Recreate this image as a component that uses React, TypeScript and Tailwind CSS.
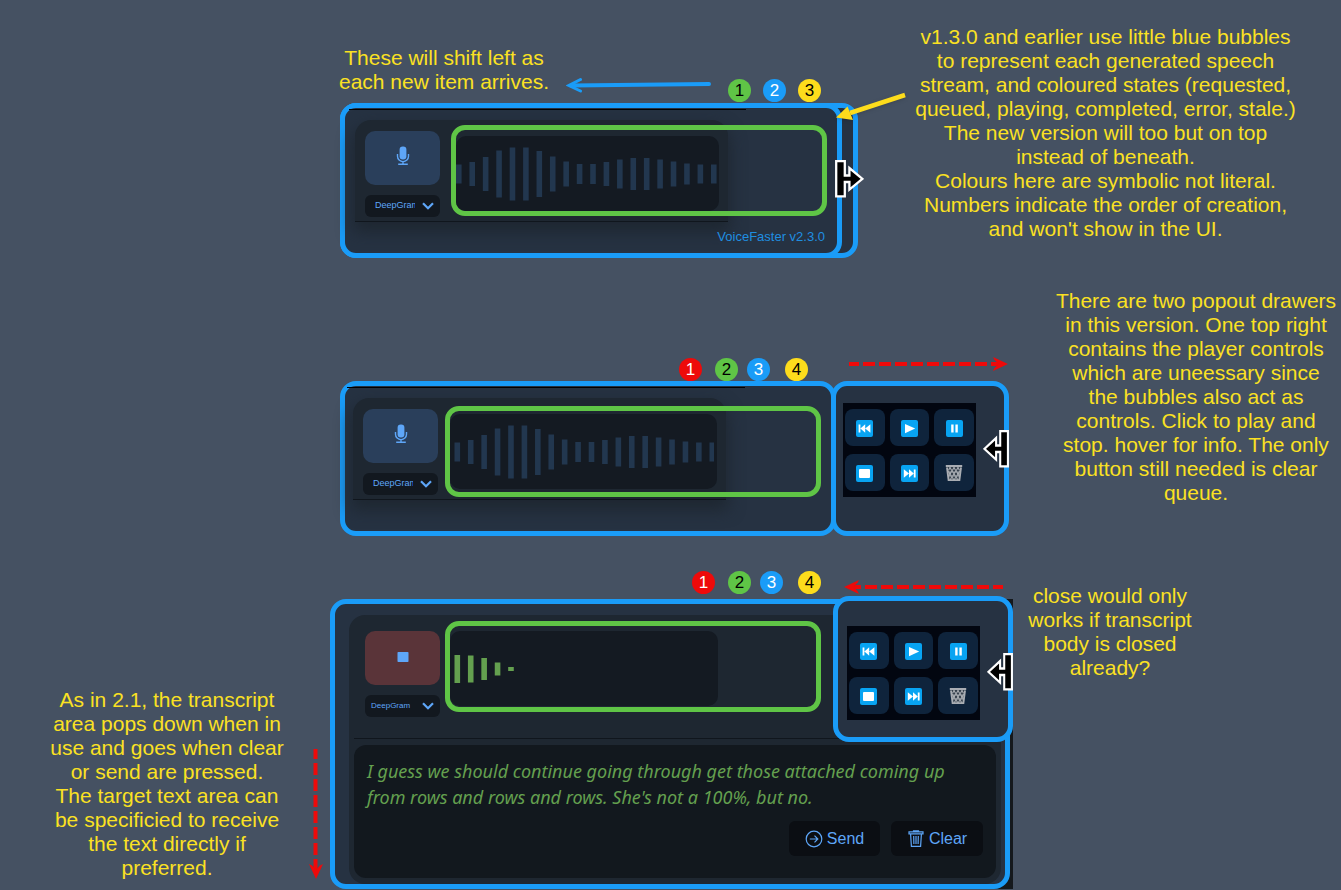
import React from "react";

type Tone = "red" | "green" | "blue" | "yellow";

const toneClass: Record<Tone, string> = {
  red: "bg-[#ee0a0a] text-white",
  green: "bg-[#5fc546] text-black",
  blue: "bg-[#1a9cf8] text-white",
  yellow: "bg-[#fddc1c] text-black",
};

function Bubble({ n, tone, className = "" }: { n: number; tone: Tone; className?: string }) {
  return (
    <span
      className={`flex size-[23px] shrink-0 items-center justify-center rounded-full text-[17px] leading-6 ${toneClass[tone]} ${className}`}
    >
      {n}
    </span>
  );
}

function Note({ lines, className = "" }: { lines: string[]; className?: string }) {
  return (
    <p className={`text-center text-[21px] leading-6 whitespace-nowrap text-[#fbe122] ${className}`}>
      {lines.map((line) => (
        <span key={line} className="block">
          {line}
        </span>
      ))}
    </p>
  );
}

function MicIcon() {
  return (
    <svg className="-mt-1" width="14" height="20" viewBox="0 0 14 20" fill="none" aria-hidden="true">
      <rect x="3.6" y="0.6" width="6.8" height="12.8" rx="3.2" fill="#5ea6f8" />
      <path d="M1.5 8v2.2a5.500 5.500 0 0 0 11 0V8M7 15.700V18M2.200 18.300h9.600" stroke="#5ea6f8" strokeWidth="1.400" />
    </svg>
  );
}

function StopIcon() {
  return (
    <svg className="-mt-0.5" width="12" height="12" viewBox="0 0 12 12" aria-hidden="true">
      <rect x="0.5" y="1" width="11" height="10" rx="0.8" fill="#5ea6f8" />
    </svg>
  );
}

function Provider({ narrow = false }: { narrow?: boolean }) {
  return (
    <div
      className={`mt-[10px] flex h-[22px] w-[75px] items-center rounded-md bg-[#12181f] ${
        narrow ? "pl-[6px]" : "pl-[10px]"
      }`}
    >
      <select
        aria-label="Speech provider"
        className={`h-full shrink-0 appearance-none bg-transparent p-0 text-[#5ea6f8] outline-none ${
          narrow ? "w-[42px] text-[8px]" : "w-10 text-[9px]"
        }`}
      >
        <option>DeepGram</option>
      </select>
      <svg
        className={`pointer-events-none ${narrow ? "ml-[9px]" : "ml-[7px]"}`}
        width="12"
        height="8"
        viewBox="0 0 12 8"
        fill="none"
        aria-hidden="true"
      >
        <path d="M1 1.2l5 5 5-5" stroke="#5ea6f8" strokeWidth="2.2" />
      </svg>
    </div>
  );
}

const idleBars = [19, 24, 34, 47, 53, 53, 46, 35, 25, 20, 20, 24, 29, 32, 32, 29, 25, 21, 19, 19];
const liveBars = [28, 27, 22, 13, 4];

function Waveform({ bars, color, start }: { bars: number[]; color: string; start: number }) {
  return (
    <svg width="264" height="75" viewBox="0 0 264 75" aria-hidden="true">
      {bars.map((h, i) => (
        <rect key={i} x={start + i * 13.42} y={38 - h / 2} width="5.6" height={h} fill={color} />
      ))}
    </svg>
  );
}

function Recorder({
  recording = false,
  start,
  stageClass,
  waveClass,
}: {
  recording?: boolean;
  start: number;
  stageClass: string;
  waveClass: string;
}) {
  return (
    <div className="flex items-start">
      <div className="shrink-0">
        <button
          type="button"
          aria-label={recording ? "Stop recording" : "Start recording"}
          className={`flex h-[54px] w-[75px] items-center justify-center rounded-[10px] ${
            recording ? "bg-[#5a3439]" : "bg-[#2a3f5b]"
          }`}
        >
          {recording ? <StopIcon /> : <MicIcon />}
        </button>
        <Provider narrow={recording} />
      </div>
      <div className={`h-[91px] w-[376px] shrink-0 rounded-[14px] border-5 border-[#5fc546] ${stageClass}`}>
        <div className={`overflow-hidden rounded-[10px] bg-[#141a22] ${waveClass}`}>
          <Waveform bars={recording ? liveBars : idleBars} color={recording ? "#64a04f" : "#22374f"} start={start} />
        </div>
      </div>
    </div>
  );
}

function ResizeHandle({ flip = false, className = "" }: { flip?: boolean; className?: string }) {
  return (
    <svg
      className={`absolute ${flip ? "-scale-x-100" : ""} ${className}`}
      width={flip ? 26 : 29}
      height="38"
      viewBox="0 0 29 38"
      preserveAspectRatio="none"
      aria-hidden="true"
    >
      <path
        d="M1.2 1.2H9.8V15.500H14.400V8L27.400 18.800L14.400 29.600V22H9.800V36.400H1.200Z"
        fill="#000"
        stroke="#fff"
        strokeWidth="2.300"
      />
    </svg>
  );
}

const glyphs: { name: string; node: React.ReactNode }[] = [
  { name: "Previous", node: <path d="M2.600 4.500h1.800v8H2.600zM9.200 4.300v8.400L4.400 8.500zM14.400 4.300v8.400L9.200 8.500z" fill="#fff" /> },
  { name: "Play", node: <path d="M4 4v9.200l10.200-4.600z" fill="#fff" /> },
  { name: "Pause", node: <path d="M5.200 4.500h2.400v8H5.200zM9.400 4.500h2.400v8H9.400z" fill="#fff" /> },
  { name: "Stop", node: <rect x="3" y="4" width="11" height="9" rx="1" fill="#fff" /> },
  { name: "Next", node: <path d="M12.800 4.500h1.800v8h-1.800zM8 4.300v8.400l4.800-4.200zM2.800 4.300v8.400l5.200-4.200z" fill="#fff" /> },
];

function BinIcon() {
  return (
    <svg width="18" height="18" viewBox="0 0 18 18" fill="none" aria-hidden="true">
      <path d="M1.500 2.600h15l-1.800 13.600H3.300z" fill="#35404c" />
      <path d="M.8 2h16.400M2 3.500l1.600 12.600h10.800L16 3.500" stroke="#a9adb3" strokeWidth="1.900" />
      <path
        d="M4.500 3l8.500 13M8.500 3l5.500 8.500M12.500 3l2 3.200M3 7l6 9M13.500 3L5 16M9.500 3L4 11.500M5.500 3l-2 3.200M15 7l-6 9M2.400 8h13.200M3 12h12"
        stroke="#a9adb3"
        strokeWidth="1.100"
      />
    </svg>
  );
}

function PlayerControls() {
  return (
    <div className="grid h-[94px] w-[133px] grid-cols-3 gap-x-[5px] gap-y-2 bg-[#020610] px-[2px] py-[6px]">
      {glyphs.map((g) => (
        <button
          key={g.name}
          type="button"
          aria-label={g.name}
          className="flex items-center justify-center rounded-lg bg-[#0f243c] pt-0.5"
        >
          <svg width="17" height="17" viewBox="0 0 17 17" aria-hidden="true">
            <rect width="17" height="17" rx="2" fill="#08a4f2" />
            {g.node}
          </svg>
        </button>
      ))}
      <button
        type="button"
        aria-label="Clear queue"
        className="flex items-center justify-center rounded-lg bg-[#0f243c] pt-0.5"
      >
        <BinIcon />
      </button>
    </div>
  );
}

function DashedArrow({ left = false, className = "" }: { left?: boolean; className?: string }) {
  return (
    <svg
      className={`${left ? "-scale-x-100" : ""} ${className}`}
      width="160"
      height="16"
      viewBox="0 0 160 16"
      fill="none"
      aria-hidden="true"
    >
      <path d="M0 8h152" stroke="#ee0a0a" strokeWidth="4" strokeDasharray="12 4" strokeDashoffset="2" />
      <path d="M144 1l15 7-15 7 1.500-3 4.500-4-4.500-4z" fill="#ee0a0a" />
    </svg>
  );
}

const cardClass =
  "h-[102px] w-[373px] rounded-t-2xl border-b border-[#10161d] bg-[#1e2731] shadow-[0_8px_16px_2px_#1e2731]";

export default function App() {
  return (
    <main
      className="min-h-screen overflow-hidden bg-[#455162]"
      style={{ fontFamily: '"Liberation Sans", Arial, sans-serif' }}
    >
      <section className="flex min-h-[289px] items-start pl-[338px]">
        <div className="relative w-[520px] shrink-0">
          <div className="flex h-[103px] items-end pb-px">
            <Note className="mb-2 w-[212px]" lines={["These will shift left as", "each new item arrives."]} />
            <svg className="mb-[9px] ml-4 shrink-0" width="146" height="16" viewBox="0 0 146 16" fill="none" aria-hidden="true">
              <path d="M5 8.500L143 7" stroke="#1a9cf8" strokeWidth="4" strokeLinecap="round" />
              <path d="M14.500 2.500L3 8.500l11.500 5.500" stroke="#1a9cf8" strokeWidth="3" strokeLinecap="round" />
            </svg>
            <div className="ml-4 flex gap-3">
              <Bubble n={1} tone="green" />
              <Bubble n={2} tone="blue" />
              <Bubble n={3} tone="yellow" />
            </div>
          </div>
          <div className="ml-0.5 h-[155px] rounded-2xl border-5 border-[#1a9cf8] bg-[#263242]">
            <div className="-m-[5px] flex h-[155px] w-[502px] flex-col rounded-2xl border-5 border-[#1a9cf8] bg-[#263242]">
              <div className="mt-px ml-1 h-px w-[397px] bg-black" />
              <div className={`mt-[10px] ml-[10px] pt-[11px] pl-[10px] ${cardClass}`}>
                <Recorder start={0} stageClass="ml-[11px] -mt-[6px]" waveClass="mt-[6px] h-[75px] w-[263px]" />
              </div>
              <p className="relative mt-[7px] mr-3 text-right text-[13px] leading-4 text-[#1f8ee0]">VoiceFaster v2.3.0</p>
            </div>
          </div>
          <ResizeHandle className="top-[160px] left-[497px]" />
          <svg className="absolute top-[88px] left-[496px] drop-shadow" width="76" height="36" viewBox="0 0 76 36" aria-hidden="true">
            <path d="M71 7L16 25" stroke="#fddc1c" strokeWidth="4.500" />
            <path d="M2 29.500L13.500 18.500 19 32z" fill="#fddc1c" />
          </svg>
        </div>
        <Note
          className="flex-1 pt-[25px] pl-3"
          lines={[
            "v1.3.0 and earlier use little blue bubbles",
            "to represent each generated speech",
            "stream, and coloured states (requested,",
            "queued, playing, completed, error, stale.)",
            "The new version will too but on top",
            "instead of beneath.",
            "Colours here are symbolic not literal.",
            "Numbers indicate the order of creation,",
            "and won't show in the UI.",
          ]}
        />
      </section>

      <section className="flex min-h-[282px] items-start pl-[340px]">
        <div className="w-[669px] shrink-0">
          <div className="flex h-[92px] items-end pl-[339px]">
            <Bubble n={1} tone="red" />
            <Bubble n={2} tone="green" className="ml-[13px]" />
            <Bubble n={3} tone="blue" className="ml-[9px]" />
            <Bubble n={4} tone="yellow" className="ml-[15px]" />
            <DashedArrow className="mb-[9px] ml-[41px] shrink-0" />
          </div>
          <div className="flex">
            <div className="h-[155px] w-[496px] shrink-0 rounded-2xl border-5 border-[#1a9cf8] bg-[#263242]">
              <div className="mt-px ml-0.5 h-px w-[398px] bg-black" />
              <div className={`mt-[10px] ml-2 pt-[11px] pl-[10px] ${cardClass}`}>
                <Recorder start={4.5} stageClass="ml-[7px] -mt-[3px]" waveClass="mt-[3px] h-[75px] w-[267px]" />
              </div>
            </div>
            <div className="relative -ml-[5px] h-[155px] flex-1 rounded-2xl border-5 border-[#1a9cf8] bg-[#263242] pt-[17px] pl-[7px]">
              <PlayerControls />
              <ResizeHandle flip className="top-[44px] -right-[5px]" />
            </div>
          </div>
        </div>
        <Note
          className="flex-1 pl-[42px]"
          lines={[
            "There are two popout drawers",
            "in this version. One top right",
            "contains the player controls",
            "which are uneessary since",
            "the bubbles also act as",
            "controls. Click to play and",
            "stop. hover for info. The only",
            "button still needed is clear",
            "queue.",
          ]}
        />
      </section>

      <section className="flex items-start">
        <Note
          className="w-[300px] shrink-0 pt-[117px] pl-[34px]"
          lines={[
            "As in 2.1, the transcript",
            "area pops down when in",
            "use and goes when clear",
            "or send are pressed.",
            "The target text area can",
            "be specificied to receive",
            "the text directly if",
            "preferred.",
          ]}
        />
        <svg className="mt-[178px] shrink-0" width="30" height="132" viewBox="0 0 30 132" fill="none" aria-hidden="true">
          <path d="M15.500 0V124" stroke="#ee0a0a" strokeWidth="4" strokeDasharray="12 4" strokeDashoffset="2" />
          <path d="M9 115l7 15 7-15-3 1.500-4 4.500-4-4.500z" fill="#ee0a0a" />
        </svg>
        <div className="relative w-[683px] shrink-0">
          <div className="flex h-7 items-start pl-[362px]">
            <Bubble n={1} tone="red" />
            <Bubble n={2} tone="green" className="ml-[13px]" />
            <Bubble n={3} tone="blue" className="ml-[9px]" />
            <Bubble n={4} tone="yellow" className="ml-[15px]" />
            <DashedArrow left className="mt-2 ml-[22px] shrink-0" />
          </div>
          <div className="bg-[linear-gradient(to_right,transparent_50%,#15191d_50%)] pr-[3px]">
            <div className="h-[290px] rounded-2xl border-5 border-[#1a9cf8] bg-[#263242] pt-[11px] pr-1 pl-[14px]">
              <div className="h-[269px] rounded-2xl bg-[#1e2731] pr-[5px] pl-[5px]">
                <div className="h-[124px] border-b border-[#10161d] pt-4 pl-[11px]">
                  <Recorder
                    recording
                    start={4.5}
                    stageClass="ml-[5px] -mt-[10px]"
                    waveClass="mt-[5px] h-[75px] w-[268px]"
                  />
                </div>
                <div className="mt-[6px] flex h-[133px] flex-col justify-between rounded-xl bg-[#12181e] pt-[13px] pr-[13px] pb-[22px] pl-[13px]">
                  <p
                    className="text-[18px] leading-[26px] whitespace-nowrap text-[#64a04f] italic"
                    style={{ fontFamily: '"Noto Sans", "Open Sans", sans-serif' }}
                  >
                    <span className="block">I guess we should continue going through get those attached coming up</span>
                    <span className="block">from rows and rows and rows. She's not a 100%, but no.</span>
                  </p>
                  <div className="flex justify-end gap-[11px]">
                    <button
                      type="button"
                      className="flex h-[35px] w-[91px] items-center justify-center gap-1 rounded-md bg-[#0b0e13] text-[16px] text-[#5ea6f8]"
                    >
                      <svg width="18" height="18" viewBox="0 0 18 18" fill="none" stroke="#5ea6f8" aria-hidden="true">
                        <circle cx="9" cy="9" r="7.800" strokeWidth="1.200" />
                        <path d="M4.800 9h8M9.500 5.700L12.800 9l-3.300 3.300" strokeWidth="1.200" />
                      </svg>
                      Send
                    </button>
                    <button
                      type="button"
                      className="flex h-[35px] w-[92px] items-center justify-center gap-1 rounded-md bg-[#0b0e13] text-[16px] text-[#5ea6f8]"
                    >
                      <svg width="18" height="18" viewBox="0 0 18 18" fill="none" stroke="#5ea6f8" strokeWidth="1.200" aria-hidden="true">
                        <path d="M2 1.800h14v2H2zM6.500 1.600V.8h5v.8M3.600 4l.8 12.400h9.200L14.400 4M6.700 6l.2 8M9 6v8M11.300 6l-.2 8" />
                      </svg>
                      Clear
                    </button>
                  </div>
                </div>
              </div>
            </div>
          </div>
          <div className="absolute top-[25px] right-0 h-[146px] w-[180px] rounded-2xl border-5 border-[#1a9cf8] bg-[#263242] pt-[25px] pl-[9px]">
            <PlayerControls />
            <ResizeHandle flip className="top-[52px] -right-[5px]" />
          </div>
        </div>
        <Note
          className="w-[194px] shrink-0 pt-[13px]"
          lines={["close would only", "works if transcript", "body is closed", "already?"]}
        />
      </section>
    </main>
  );
}
